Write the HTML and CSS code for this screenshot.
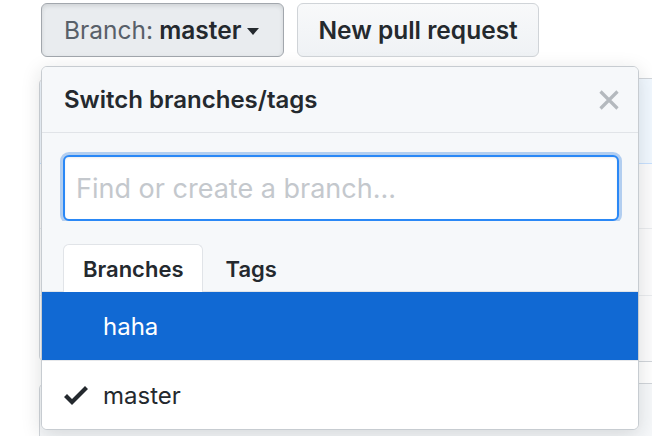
FILE: index.html
```html
<!DOCTYPE html>
<html lang="en">
<head>
<meta charset="utf-8">
<title>Switch branches</title>
<link rel="stylesheet" href="styles.css">
</head>
<body>
<div class="page">
  <div class="toolbar">
    <button class="btn btn-selected"><span class="btn-text"><span class="btn-label">Branch:</span> <span class="btn-value">master</span></span><span class="caret"></span></button>
    <button class="btn">New pull request</button>
  </div>

  <div class="behind">
    <div class="box">
      <div class="box-head"></div>
      <div class="box-row r1"></div>
      <div class="box-row r2"></div>
      <div class="box-row r3"></div>
    </div>
    <div class="box box-second">
      <div class="box-head gray"></div>
    </div>
  </div>

  <div class="menu">
    <div class="menu-header">
      <span class="menu-title">Switch branches/tags</span>
      <span class="menu-close">
        <svg width="22" height="22" viewBox="0 0 22 22" aria-hidden="true"><path d="M2.5 2.5 L19.5 19.5 M19.5 2.5 L2.5 19.5" stroke="#b4b9be" stroke-width="3.2" fill="none"/></svg>
      </span>
    </div>
    <div class="menu-filter">
      <input class="filter-input" type="text" placeholder="Find or create a branch...">
    </div>
    <div class="menu-tabs">
      <span class="tab tab-selected">Branches</span>
      <span class="tab">Tags</span>
    </div>
    <div class="menu-list">
      <div class="menu-item menu-item-active">
        <span class="check-slot"></span>
        <span class="item-name">haha</span>
      </div>
      <div class="menu-item">
        <span class="check-slot">
          <svg width="24" height="32" viewBox="0 0 12 16" aria-hidden="true"><path d="M12 5l-8 8-4-4 1.5-1.5L4 10l6.5-6.5L12 5z" fill="#24292e"/></svg>
        </span>
        <span class="item-name">master</span>
      </div>
    </div>
  </div>
</div>
</body>
</html>
```

FILE: styles.css
```css
html, body {
  margin: 0;
  padding: 0;
  background: #ffffff;
  overflow: hidden;
}

.page {
  position: relative;
  width: 652px;
  height: 436px;
  overflow: hidden;
  font-family: Inter, "Liberation Sans", sans-serif;
  color: #24292e;
}

/* top buttons */
.toolbar {
  display: flex;
  gap: 13px;
  padding: 3px 0 0 41px;
}

.btn {
  display: flex;
  align-items: center;
  height: 54px;
  box-sizing: border-box;
  padding: 0 20px 0 20px;
  border: 1px solid #d0d4d8;
  border-radius: 6px;
  background: linear-gradient(#f8f9fa, #eff2f5);
  font-family: inherit;
  font-size: 24.5px;
  font-weight: 600;
  color: #24292e;
}

.btn-selected {
  padding: 0 24px 0 22px;
  background: #e9ecef;
  border-color: #a2a7ad;
  box-shadow: inset 0 2px 4px rgba(27, 31, 35, 0.12);
}

.btn-text {
  white-space: pre;
}

.btn-label {
  font-weight: 400;
  color: #586069;
}

.caret {
  display: inline-block;
  width: 0;
  height: 0;
  margin-left: 6px;
  margin-top: 2px;
  border-top: 7px solid #24292e;
  border-left: 6px solid transparent;
  border-right: 6px solid transparent;
}

/* page content behind the menu */
.behind {
  margin-top: 21px;
  margin-left: 39px;
  width: 700px;
}

.box {
  border: 1px solid #d1d5da;
  border-radius: 6px;
  overflow: hidden;
}

.box-head {
  height: 84px;
  background: #f1f8ff;
  border-bottom: 1px solid #c8e1ff;
}

.box-head.gray {
  height: 60px;
  background: #f6f8fa;
  border-bottom: 0;
}

.box-row {
  border-top: 1px solid #eaecef;
  background: #fcfcfd;
}

.r1 { height: 64px; border-top: 0; }
.r2 { height: 66px; }
.r3 { height: 65px; }

.box-second {
  margin-top: 21px;
}

/* dropdown menu */
.menu {
  position: absolute;
  left: 41px;
  top: 66px;
  width: 598px;
  box-sizing: border-box;
  border: 1px solid #c7ccd1;
  border-radius: 6px;
  background: #ffffff;
  overflow: hidden;
  box-shadow: 0 5px 20px rgba(27, 31, 35, 0.15);
}

.menu-header {
  display: flex;
  align-items: center;
  justify-content: space-between;
  height: 65px;
  padding: 0 18px 0 22px;
  background: #f6f8fa;
  border-bottom: 1px solid #e1e4e8;
}

.menu-title {
  font-size: 24px;
  font-weight: 600;
  color: #24292e;
}

.menu-close {
  display: flex;
  width: 22px;
  height: 22px;
  margin-top: 1px;
}

.menu-filter {
  padding: 22px 19px 0 21px;
  background: #f6f8fa;
}

.filter-input {
  display: block;
  width: 100%;
  height: 66px;
  box-sizing: border-box;
  margin: 0;
  padding: 0 11px;
  border: 2px solid #2a88f6;
  border-radius: 6px;
  background: #ffffff;
  box-shadow: 0 0 0 3px #b2cef0, inset 0 1px 2px rgba(27, 31, 35, 0.075);
  outline: none;
  font-family: inherit;
  font-size: 27px;
  color: #24292e;
}

.filter-input::placeholder {
  color: #c4c8cd;
}

.menu-tabs {
  display: flex;
  gap: 3px;
  height: 47px;
  padding: 23px 21px 0;
  background: #f6f8fa;
  border-bottom: 1px solid #e1e4e8;
}

.tab {
  display: flex;
  align-items: center;
  height: 48px;
  box-sizing: border-box;
  padding: 0 18px 0 19px;
  margin-bottom: -1px;
  border: 1px solid transparent;
  border-bottom: 0;
  border-radius: 6px 6px 0 0;
  font-size: 22px;
  font-weight: 600;
  color: #24292e;
}

.tab-selected {
  background: #ffffff;
  border-color: #e1e4e8;
}

.menu-list {
  display: flex;
  flex-direction: column;
}

.menu-item {
  display: flex;
  align-items: center;
  height: 68px;
  padding-left: 22px;
  background: #ffffff;
  color: #24292e;
  font-size: 24px;
}

.menu-item-active {
  background: #1169d3;
  color: #ffffff;
  border-bottom: 1px solid #e6e8eb;
}

.check-slot {
  display: flex;
  align-items: center;
  width: 24px;
  height: 32px;
  margin-right: 15px;
}

.item-name {
  font-weight: 400;
}
```
